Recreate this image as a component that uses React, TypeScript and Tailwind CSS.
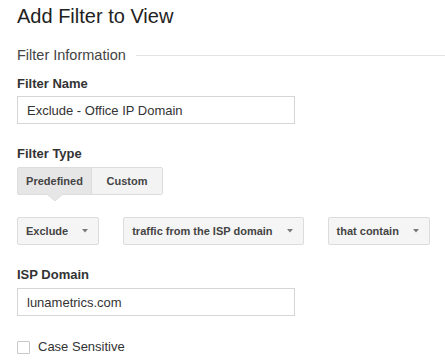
import { useState } from 'react';

const font = { fontFamily: '"Liberation Sans", Arial, sans-serif' };

function Caret() {
  return (
    <svg width="6" height="4" viewBox="0 0 6 4" className="shrink-0">
      <polygon points="0,0 6,0 3,3.5" fill="#7a7a7a" />
    </svg>
  );
}

function Dropdown({ label }: { label: string }) {
  return (
    <button
      type="button"
      className="flex h-[28px] items-center gap-[14px] rounded-[2px] border border-[#dcdcdc] bg-[#f5f5f5] pl-[8px] pr-[10px] text-[11px] font-bold text-[#444]"
    >
      <span className="leading-none">{label}</span>
      <Caret />
    </button>
  );
}

export default function App() {
  const [mode, setMode] = useState<'predefined' | 'custom'>('predefined');
  const [caseSensitive, setCaseSensitive] = useState(false);

  return (
    <div className="min-h-[364px] w-[445px] bg-white pl-[17px] pt-[4px]" style={font}>
      <h1 className="text-[20px] leading-[24px] text-[#222]">Add Filter to View</h1>

      <div className="mt-[17px] flex items-center">
        <span className="text-[14.5px] leading-[20px] text-[#444]">Filter Information</span>
        <div className="ml-[10px] h-px flex-1 bg-[#e3e3e3]" />
      </div>

      <div className="mt-[11px] text-[13px] font-bold leading-[16px] text-[#333]">Filter Name</div>
      <input
        defaultValue="Exclude - Office IP Domain"
        className="mt-[4px] block h-[28px] w-[278px] border border-[#d6d6d6] px-[9px] text-[13px] text-[#333] outline-none"
      />

      <div className="mt-[22px] text-[13px] font-bold leading-[16px] text-[#333]">Filter Type</div>
      <div className="mt-[5px] flex h-[28px] w-fit rounded-[2px] border border-[#dcdcdc] text-[11px] font-bold text-[#444]">
        <button
          type="button"
          onClick={() => setMode('predefined')}
          className={`relative flex w-[74px] items-center justify-center border-r border-[#dcdcdc] ${mode === 'predefined' ? 'bg-[#e6e6e6]' : 'bg-[#f3f3f3]'}`}
        >
          Predefined
          {mode === 'predefined' && (
            <svg width="16" height="8" viewBox="0 0 16 8" className="absolute left-1/2 top-full -translate-x-1/2">
              <polygon points="0,0 16,0 8,7" fill="#e6e6e6" />
              <polyline points="0,0 8,7 16,0" fill="none" stroke="#dcdcdc" strokeWidth="1" />
              <line x1="1" y1="0" x2="15" y2="0" stroke="#e6e6e6" strokeWidth="1.5" />
            </svg>
          )}
        </button>
        <button
          type="button"
          onClick={() => setMode('custom')}
          className={`relative flex w-[70px] items-center justify-center ${mode === 'custom' ? 'bg-[#e6e6e6]' : 'bg-[#f3f3f3]'}`}
        >
          Custom
        </button>
      </div>

      <div className="mt-[22px] flex gap-[24px]">
        <Dropdown label="Exclude" />
        <Dropdown label="traffic from the ISP domain" />
        <Dropdown label="that contain" />
      </div>

      <div className="mt-[22px] text-[13px] font-bold leading-[16px] text-[#333]">ISP Domain</div>
      <input
        defaultValue="lunametrics.com"
        className="mt-[5px] block h-[28px] w-[278px] border border-[#d6d6d6] px-[9px] text-[13px] text-[#333] outline-none"
      />

      <label className="mt-[23px] flex h-[16px] w-fit cursor-pointer items-center text-[13px] leading-[16px] text-[#333]">
        <span
          onClick={() => setCaseSensitive(v => !v)}
          className={`h-[13px] w-[13px] rounded-[1px] border border-[#c8c8c8] ${caseSensitive ? 'bg-[#4d90fe]' : 'bg-white'}`}
        />
        <span className="ml-[8px]">Case Sensitive</span>
      </label>
    </div>
  );
}
